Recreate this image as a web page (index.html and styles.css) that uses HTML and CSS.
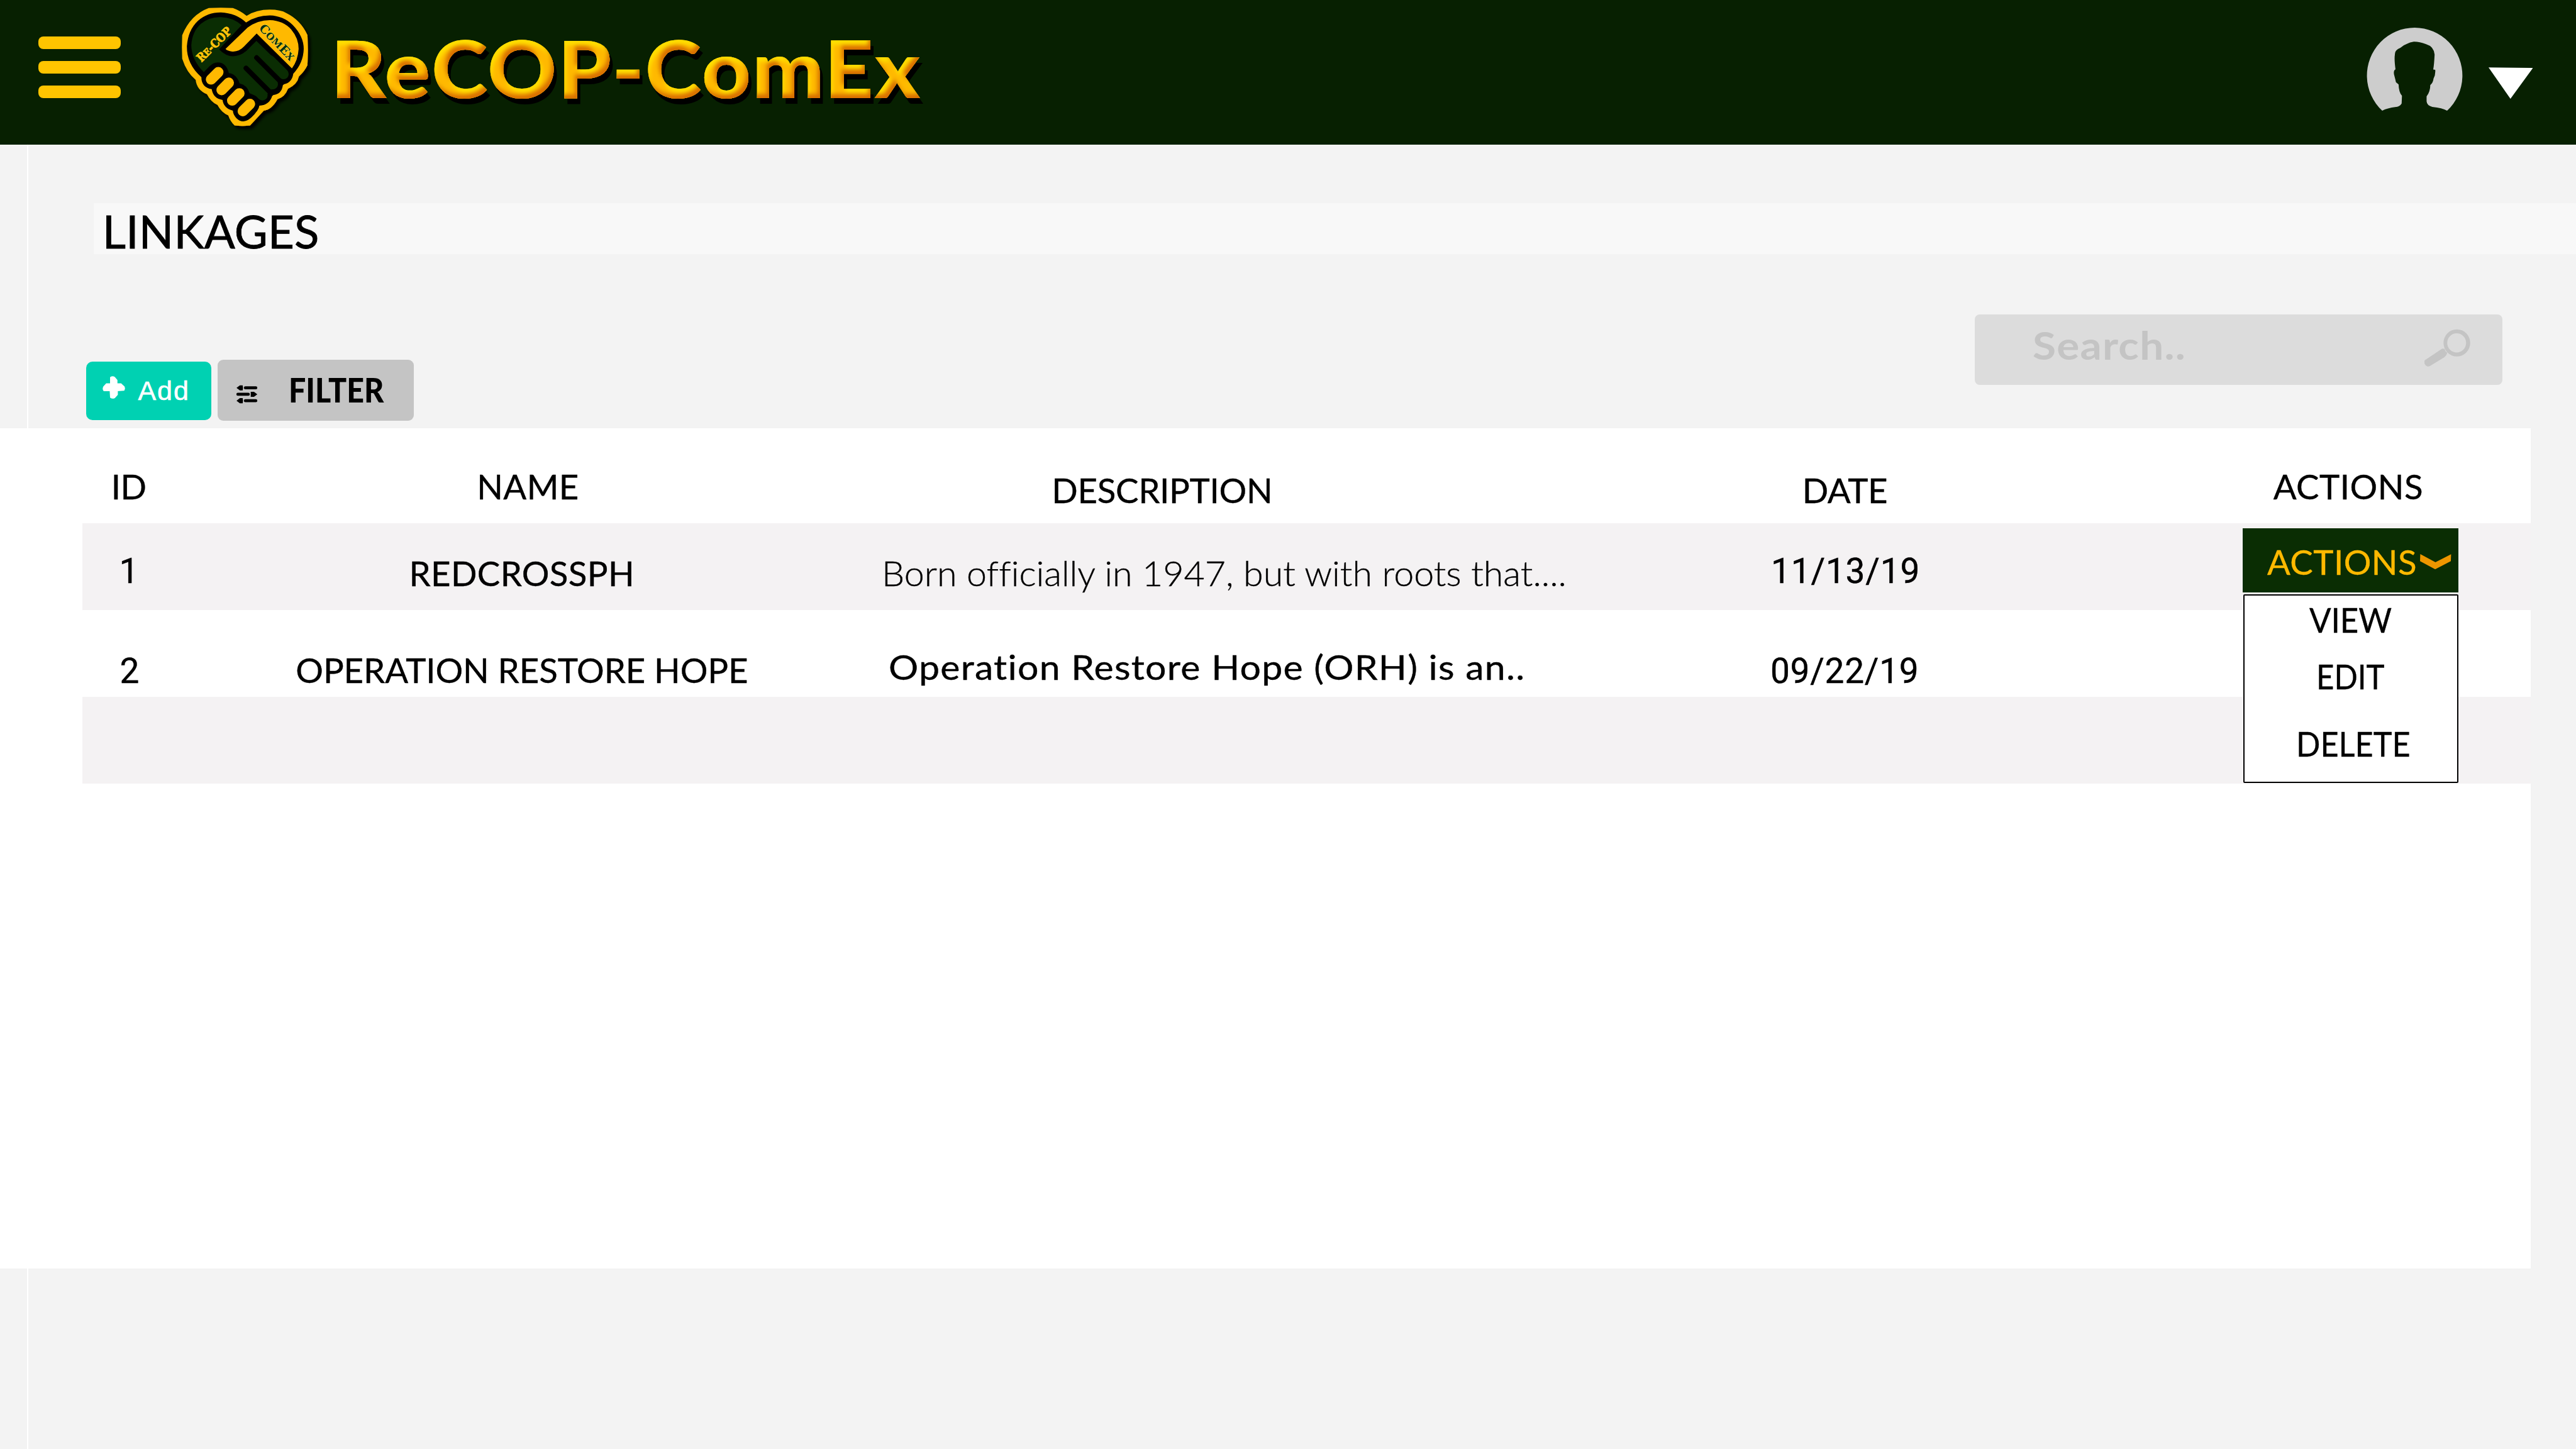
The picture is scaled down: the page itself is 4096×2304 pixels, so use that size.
FILE: index.html
```html
<!DOCTYPE html>
<html lang="en">
<head>
<meta charset="utf-8">
<title>ReCOP-ComEx – Linkages</title>
<link rel="stylesheet" href="styles.css">
</head>
<body>
<header class="topbar">
  <button class="menu-toggle" aria-label="Menu"><span></span><span></span><span></span></button>
  <svg class="logo" viewBox="0 0 1140 990" aria-hidden="true">
    <defs>
      <filter id="soft" x="-10%" y="-10%" width="120%" height="120%"><feDropShadow dx="20" dy="24" stdDeviation="9" flood-color="#000" flood-opacity="1"/></filter>
    </defs>
    <path filter="url(#soft)" fill="#ffb900" d="M295,60 Q385,55 475,60 Q530,80 577,118 Q650,72 750,72 Q830,72 875,98 Q980,150 1031,262 Q1037,375 1031,485 Q1010,530 967,570 Q955,630 885,662 Q865,720 807,740 Q765,818 705,825 L603,935 Q548,942 488,935 Q455,905 441,860 Q390,840 360,782 Q310,760 282,702 Q205,670 198,595 Q130,540 97,437 Q93,350 97,262 Q160,110 295,60Z"/>
    <path d="M385,93 Q500,98 573,168 Q650,115 750,115 Q850,118 920,185 Q1003,270 1003,365 Q1000,470 925,550 Q915,620 848,630 Q840,705 770,708 Q750,785 672,787 Q670,820 610,878 Q550,930 500,880 Q475,850 475,825 Q405,805 398,745 Q328,735 317,665 Q240,650 240,575 Q130,480 132,345 Q140,225 215,155 Q285,93 385,93Z"/>
    <path fill="#0a2d03" d="M385,128 Q475,130 540,188 L372,368 Q420,418 475,420 Q530,418 575,380 L650,305 L880,530 L700,740 L600,695 Q580,632 525,622 Q502,552 445,545 Q425,465 362,465 Q330,465 300,495 L258,538 Q165,445 165,335 Q172,235 235,178 Q300,125 385,128Z"/>
    <g fill="none" stroke-linecap="round">
      <path stroke="#0a2d03" stroke-width="78" d="M752,452 L852,552 M692,548 L772,628 M635,650 L695,710"/>
      <path stroke="#000" stroke-width="37" d="M652,430 L840,618 M573,508 L762,697"/>
      <path stroke="#ffb900" stroke-width="78" d="M366,538 L312,592 M444,617 L391,671 M523,696 L470,749 M602,775 L549,828"/>
    </g>
    <path fill="#ffb900" d="M750,150 Q850,153 910,220 Q965,285 965,365 Q960,450 915,510 L652,250 L560,345 Q520,388 470,384 Q430,380 420,365 L585,205 Q660,150 750,150Z"/>
    <text class="logo-text logo-text-left" transform="translate(240 466) rotate(-44.5)" textLength="325" lengthAdjust="spacingAndGlyphs">R<tspan class="small">E</tspan>-COP</text>
    <text class="logo-text logo-text-right" transform="translate(664 214) rotate(46)" textLength="340" lengthAdjust="spacingAndGlyphs">C<tspan class="small">OM</tspan>E<tspan class="small">X</tspan></text>
  </svg>
  <svg class="defs" aria-hidden="true">
    <filter id="bevel" x="-5%" y="-10%" width="110%" height="130%">
      <feOffset in="SourceAlpha" dx="-4" dy="-7" result="o1"/>
      <feGaussianBlur in="o1" stdDeviation="3" result="b1"/>
      <feComposite in="SourceAlpha" in2="b1" operator="out" result="lowEdge"/>
      <feFlood flood-color="#d96f00"/>
      <feComposite in2="lowEdge" operator="in" result="low"/>
      <feOffset in="SourceAlpha" dx="3" dy="7" result="o2"/>
      <feGaussianBlur in="o2" stdDeviation="3" result="b2"/>
      <feComposite in="SourceAlpha" in2="b2" operator="out" result="highEdge"/>
      <feFlood flood-color="#ffdf00"/>
      <feComposite in2="highEdge" operator="in" result="high"/>
      <feOffset in="SourceAlpha" dx="5" dy="9" result="o3"/>
      <feFlood flood-color="#000500"/>
      <feComposite in2="o3" operator="in" result="shadow"/>
      <feMerge><feMergeNode in="shadow"/><feMergeNode in="SourceGraphic"/><feMergeNode in="high"/><feMergeNode in="low"/></feMerge>
    </filter>
  </svg>
  <h1 class="brand">ReCOP-ComEx</h1>
  <svg class="avatar" viewBox="200 200 640 640" preserveAspectRatio="none" aria-label="Profile">
    <path fill="#cdcdcd" d="M310,824 A310,357 0 1 1 731,824 Q700,803 635,796 Q600,785 598,755 L598,717 Q622,680 622,632 Q640,617 643,585 Q657,555 654,519 L641,517 Q647,480 650,405 Q645,345 595,328 Q550,308 515,309 Q490,312 470,325 Q450,332 428,355 Q392,370 392,405 Q387,440 396,515 Q380,525 388,560 Q395,590 399,612 L416,628 Q418,690 438,712 L436,770 Q425,793 400,796 Q340,805 310,824Z"/>
  </svg>
  <svg class="caret" viewBox="998 500 288 236" preserveAspectRatio="none" aria-hidden="true"><path fill="#fff" d="M998,501 L1286,505 L1140,735Z"/></svg>
</header>

<main class="page">
  <h2 class="page-title">LINKAGES</h2>

  <div class="toolbar">
    <button class="btn-add">
      <svg class="plus" viewBox="130 155 180 180" aria-hidden="true"><path fill="#fff" stroke="#fff" stroke-width="8" stroke-linejoin="round" d="M195,170 Q210,160 225,170 L242,190 V218 H272 L296,240 Q302,252 294,265 L245,268 V298 L225,320 Q208,328 195,318 L192,268 H145 Q136,255 144,240 L163,218 H195Z"/></svg>
      <span>Add</span>
    </button>
    <button class="btn-filter">
      <svg class="sliders" viewBox="1130 228 164 142" aria-hidden="true">
        <path d="M1135,250 L1160,231 H1181 Q1186,250 1181,269 H1160Z M1135,346 L1160,327 H1181 Q1186,346 1181,365 H1160Z M1290,298 L1265,279 H1241 V317 H1265Z"/>
        <path stroke="#000" stroke-width="22" stroke-linecap="round" d="M1201,250 H1279 M1145,298 H1223 M1201,346 H1279"/>
      </svg>
      <span class="fit">FILTER</span>
    </button>
    <div class="search">
      <span class="fit">Search..</span>
      <svg class="magnifier" viewBox="1195 200 120 250" preserveAspectRatio="none" aria-hidden="true">
        <path fill="#c4c4c4" fill-rule="evenodd" d="M1246,291 A32.5,88 0 1 1 1311,291 A32.5,88 0 1 1 1246,291Z M1255,291 A23,62 0 1 0 1301,291 A23,62 0 1 0 1255,291Z"/>
        <path fill="#c4c4c4" d="M1243,328 L1249,330 Q1250,350 1255,353 Q1254,372 1247,386 L1213,441 Q1207,448 1203,438 Q1198,425 1200,404Z"/>
      </svg>
    </div>
  </div>

  <section class="card">
    <div class="row head">
      <div class="cell id">ID</div>
      <div class="cell name">NAME</div>
      <div class="cell desc">DESCRIPTION</div>
      <div class="cell date">DATE</div>
      <div class="cell act">ACTIONS</div>
    </div>
    <div class="row first">
      <div class="cell id num">1</div>
      <div class="cell name">REDCROSSPH</div>
      <div class="cell desc"><span class="fit">Born officially in 1947, but with roots that....</span></div>
      <div class="cell date num">11/13/19</div>
      <div class="cell act">
        <button class="actions-btn"><span>ACTIONS</span>
          <svg class="chevron" viewBox="961 246 121 80" preserveAspectRatio="none" aria-hidden="true"><path fill="#ee9600" d="M962,246 L1021,289 L1082,247 L1081,283 L1020,326 L961,283Z"/></svg>
        </button>
        <div class="menu">
          <div class="item view"><span class="fit">VIEW</span></div>
          <div class="item edit"><span class="fit">EDIT</span></div>
          <div class="item delete"><span class="fit">DELETE</span></div>
        </div>
      </div>
    </div>
    <div class="row second">
      <div class="cell id num">2</div>
      <div class="cell name">OPERATION RESTORE HOPE</div>
      <div class="cell desc"><span class="fit">Operation Restore Hope (ORH) is an..</span></div>
      <div class="cell date num">09/22/19</div>
    </div>
    <div class="row empty"></div>
  </section>
</main>
</body>
</html>
```
FILE: styles.css
```css
* { box-sizing: border-box; }

body {
  margin: 0;
  width: 4096px;
  height: 2304px;
  overflow: hidden;
  background: linear-gradient(90deg, #f3f3f3 43px, #fff 43px, #fff 45.4px, #f3f3f3 45.4px);
  font: 400 54.6px/66px Lato, sans-serif;
  font-variant-ligatures: none;
  color: #000;
}

button {
  margin: 0;
  padding: 0;
  border: 0;
  font: inherit;
  color: inherit;
  letter-spacing: inherit;
  text-align: left;
}

svg { display: block; flex: none; }
.defs { width: 0; height: 0; }

/* Text drawn slightly wider or narrower than the face's natural width */
.fit { display: inline-block; transform-origin: 0 50%; white-space: nowrap; }

/* Top bar */
.topbar {
  display: flex;
  align-items: flex-start;
  height: 230.4px;
  padding: 0 69px 0 61.3px;
  background: #072001;
}

.menu-toggle {
  display: flex;
  flex-direction: column;
  gap: 19px;
  width: 131.2px;
  margin-top: 57.6px;
  background: none;
}
.menu-toggle span {
  height: 20px;
  border-radius: 8px;
  background: #ffc400;
}

.logo { width: 243.2px; height: 211.2px; margin-left: 76.3px; }
.logo-text { font: 700 88px "DejaVu Serif", serif; }
.logo-text .small { font-size: 70px; }
.logo-text-left { fill: #ffc40a; stroke: #ffc40a; stroke-width: 4; }
.logo-text-right { fill: #07300f; stroke: #f5dc4a; stroke-width: 5; paint-order: stroke; }

.brand {
  margin: 32px 0 0 14.3px;
  font: 900 125.6px/151px Lato, sans-serif;
  letter-spacing: 1.8px;
  white-space: nowrap;
  color: #ffb900;
  transform: scaleX(1.08);
  transform-origin: 0 50%;
  filter: url(#bevel);
}

.avatar { width: 156.7px; height: 136.5px; margin: 42.7px 0 0 auto; }
.caret { width: 70.5px; height: 50.3px; margin: 106.7px 0 0 38.7px; }

/* Page heading */
.page { display: flex; flex-direction: column; }

.page-title {
  height: 81.5px;
  margin: 92.4px 0 0 148.6px;
  padding-left: 14.2px;
  background: #f8f8f8;
  font: 400 72.6px/87px Lato, sans-serif;
  letter-spacing: 0.19px;
  -webkit-text-stroke: 0.8px #000;
}

/* Toolbar */
.toolbar {
  display: flex;
  align-items: flex-start;
  height: 276.3px;
  padding: 0 117.5px 0 137px;
}

.btn-add {
  display: flex;
  align-items: flex-start;
  gap: 19px;
  width: 199.3px;
  height: 92.9px;
  margin-top: 170.9px;
  padding: 22px 0 0 25.1px;
  border-radius: 10px;
  background: #00d1b2;
  color: #fff;
  font: 400 43px/48px "Liberation Sans", sans-serif;
  letter-spacing: 1.95px;
  -webkit-text-stroke: 0.6px #fff;
}
.plus { width: 38.4px; height: 38.4px; }

.btn-filter {
  display: flex;
  align-items: flex-start;
  gap: 48.5px;
  width: 312px;
  height: 97.3px;
  margin: 167.9px 0 0 9.4px;
  padding: 15.3px 0 0 29.7px;
  border-radius: 9px;
  background: #c4c4c4;
  font: 900 54px/65px Lato, sans-serif;
}
.btn-filter .fit { transform: scaleX(0.895); }
.sliders { width: 35px; height: 30.3px; margin-top: 24.3px; }

.search {
  display: flex;
  align-items: flex-start;
  justify-content: space-between;
  width: 838.5px;
  height: 111.9px;
  margin: 95.5px 0 0 auto;
  padding: 11px 47.7px 0 92.3px;
  border-radius: 8px;
  background: #dcdcdc;
  color: #c4c4c4;
  font: 700 62px/74px Lato, sans-serif;
  letter-spacing: 1.1px;
}
.search .fit { transform: scaleX(1.09); }
.magnifier { width: 78.4px; height: 61.2px; margin-top: 11.8px; }

/* Table */
.card {
  width: 4023.5px;
  height: 1336.7px;
  padding-left: 130.6px;
  background: #fff;
}

.row {
  display: grid;
  grid-template-columns: 341.7px 929.5px 1413.2px 751.2px 457.3px;
  height: 138px;
  white-space: nowrap;
  -webkit-text-stroke: 0.4px currentColor;
}
.row.head { height: 151.3px; }
.row.first, .row.empty { background: #f4f2f3; }
.num { font-family: Roboto, sans-serif; font-size: 55px; }

.head .cell { padding-top: 59.7px; }
.head .id { padding-left: 46.2px; letter-spacing: -0.69px; }
.head .name { padding-left: 286px; letter-spacing: 0.36px; }
.head .desc { padding: 65.1px 0 0 270.5px; letter-spacing: -0.3px; }
.head .date { padding: 65.1px 0 0 50.9px; letter-spacing: -0.57px; }
.head .act { padding-left: 48.5px; letter-spacing: 0.5px; }

.first .id { padding: 43.5px 0 0 59px; }
.first .name { padding: 46.4px 0 0 178.2px; letter-spacing: 0.36px; }
.first .desc { padding-top: 46.4px; font-weight: 300; }
.first .desc .fit { transform: scaleX(1.05); }
.first .date { padding: 43.5px 0 0 1px; letter-spacing: 0.8px; }

.second .id { padding: 64px 0 0 60px; }
.second .name { padding-top: 62px; margin-left: -2px; letter-spacing: -0.09px; }
.second .desc { padding: 57px 0 0 11.2px; letter-spacing: 1.19px; }
.second .desc .fit { transform: scaleX(1.08); }
.second .date { padding-top: 64px; letter-spacing: 0.7px; }

/* Row actions dropdown */
.first .act { position: relative; padding-top: 7.8px; }

.actions-btn {
  display: flex;
  align-items: flex-start;
  justify-content: space-between;
  width: 342.8px;
  height: 102.3px;
  padding: 19.9px 11.3px 0 38.8px;
  background: #0a2d03;
  color: #ffb900;
  letter-spacing: 0.45px;
}
.chevron { width: 49.4px; height: 24.2px; margin-top: 21.4px; }

.menu {
  position: absolute;
  top: 112.8px;
  left: 1.2px;
  z-index: 1;
  width: 341.6px;
  height: 300.6px;
  padding-top: 5.3px;
  border: 2px solid #000;
  border-radius: 2px;
  background: #fff;
}
.view { padding-left: 103px; }
.view .fit { transform: scaleX(0.935); }
.edit { margin-top: 24.4px; padding-left: 113.8px; }
.edit .fit { transform: scaleX(0.9); }
.delete { margin-top: 40.3px; padding-left: 81.6px; }
.delete .fit { transform: scaleX(0.925); }
```
